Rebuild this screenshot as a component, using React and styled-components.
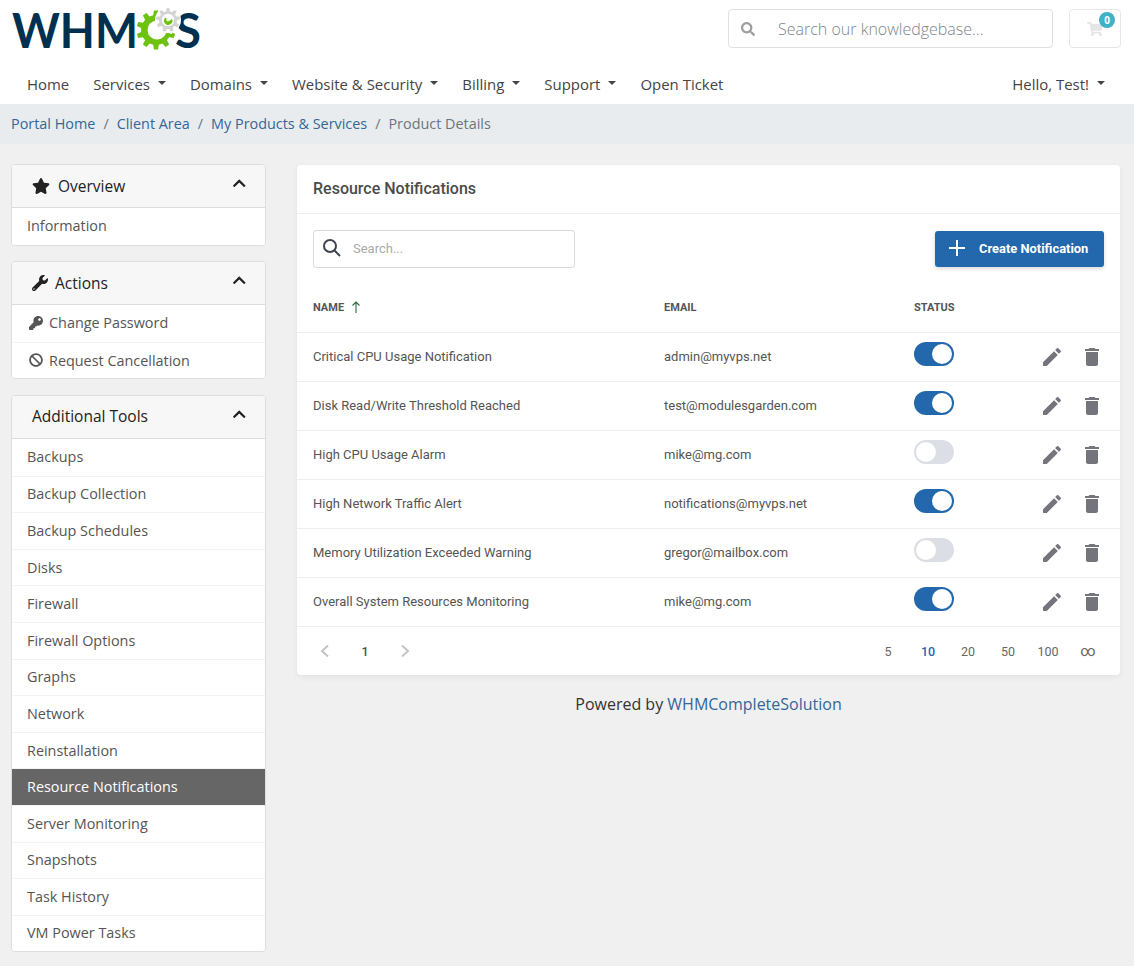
import React from "react";
import styled, { createGlobalStyle } from "styled-components";
import {
  FaSearch,
  FaShoppingCart,
  FaStar,
  FaWrench,
  FaKey,
  FaBan,
  FaChevronUp,
} from "react-icons/fa";
import { MdEdit, MdDelete } from "react-icons/md";

const GlobalStyle = createGlobalStyle`
  html, body {
    margin: 0;
    padding: 0;
    background: #f0f0f0;
  }
  body {
    font-family: "Open Sans", "Liberation Sans", sans-serif;
    color: #333;
  }
  * { box-sizing: border-box; }
`;

const navItems = [
  { label: "Home" },
  { label: "Services", caret: true },
  { label: "Domains", caret: true },
  { label: "Website & Security", caret: true },
  { label: "Billing", caret: true },
  { label: "Support", caret: true },
  { label: "Open Ticket" },
];

const crumbs = ["Portal Home", "Client Area", "My Products & Services"];

const toolLinks = [
  "Backups",
  "Backup Collection",
  "Backup Schedules",
  "Disks",
  "Firewall",
  "Firewall Options",
  "Graphs",
  "Network",
  "Reinstallation",
  "Resource Notifications",
  "Server Monitoring",
  "Snapshots",
  "Task History",
  "VM Power Tasks",
];

const rows = [
  { name: "Critical CPU Usage Notification", email: "admin@myvps.net", on: true },
  { name: "Disk Read/Write Threshold Reached", email: "test@modulesgarden.com", on: true },
  { name: "High CPU Usage Alarm", email: "mike@mg.com", on: false },
  { name: "High Network Traffic Alert", email: "notifications@myvps.net", on: true },
  { name: "Memory Utilization Exceeded Warning", email: "gregor@mailbox.com", on: false },
  { name: "Overall System Resources Monitoring", email: "mike@mg.com", on: true },
];

const pageSizes = ["5", "10", "20", "50", "100", "∞"];

const gearPath = (cx, cy, outer, inner, teeth) => {
  let d = "";
  const step = (Math.PI * 2) / teeth;
  for (let i = 0; i < teeth; i++) {
    const a = i * step - Math.PI / 2;
    const pts = [
      [a - step * 0.3, inner],
      [a - step * 0.17, outer],
      [a + step * 0.17, outer],
      [a + step * 0.3, inner],
    ];
    pts.forEach(([ang, r], j) => {
      const x = (cx + Math.cos(ang) * r).toFixed(1);
      const y = (cy + Math.sin(ang) * r).toFixed(1);
      d += `${i === 0 && j === 0 ? "M" : "L"}${x} ${y} `;
    });
  }
  return d + "Z";
};

const Logo = () => (
  <LogoSvg width="190" height="44" viewBox="0 0 190 44">
    <text x="0" y="41" fontFamily="Lato, sans-serif" fontWeight="700" fontSize="48" fill="#003050" textLength="126" lengthAdjust="spacingAndGlyphs">WHM</text>
    <text x="163" y="41" fontFamily="Lato, sans-serif" fontWeight="700" fontSize="48" fill="#003050" textLength="26" lengthAdjust="spacingAndGlyphs">S</text>
    {/* green gear, open towards the grey one */}
    <path d={gearPath(144, 23, 19.5, 15, 10)} fill="#6cc20e" />
    <circle cx="145" cy="23" r="9.5" fill="#fff" />
    <path d="M145 23 L160 16 L160 27 Z" fill="#fff" />
    {/* grey gear */}
    <circle cx="156" cy="13" r="13" fill="#fff" />
    <path d={gearPath(156, 13, 12, 9, 9)} fill="#d4d4d4" />
    <circle cx="156" cy="13" r="6.2" fill="#fff" />
    <path d="M153 11 A4.2 4.2 0 1 0 160 12 L157 14 A1.4 1.4 0 0 1 155 11 Z" fill="#6cc20e" />
  </LogoSvg>
);

const LogoSvg = styled.svg`
  display: block;
  overflow: visible;
`;

const Header = styled.header`
  background: #fff;
  height: 66px;
  padding: 9px 13px 0 12px;
  display: flex;
  align-items: flex-start;
`;

const LogoWrap = styled.a`
  display: block;
  margin-top: -2px;
  height: 44px;
  margin-right: auto;
`;

const KbSearch = styled.div`
  width: 325px;
  height: 39px;
  border: 1px solid #e0e0e0;
  border-radius: 4px;
  display: flex;
  align-items: center;
  padding-left: 12px;
  background: #fff;

  svg {
    font-size: 14px;
    color: #a09d9d;
    margin-right: 23px;
  }
`;

const KbPlaceholder = styled.span`
  color: #7c858d;
  font-size: 16px;
  font-weight: 300;
`;

const CartButton = styled.div`
  position: relative;
  width: 52px;
  height: 39px;
  margin-left: 16px;
  border: 1px solid #e6e6e6;
  border-radius: 4px;
  display: flex;
  align-items: center;
  justify-content: center;
  color: #e5e5e5;
  font-size: 16px;
`;

const CartBadge = styled.span`
  position: absolute;
  top: 2px;
  right: 5px;
  width: 16px;
  height: 16px;
  border-radius: 50%;
  background: #3fb2c6;
  color: #fff;
  font-size: 10px;
  font-weight: 700;
  display: flex;
  align-items: center;
  justify-content: center;
`;

const Nav = styled.nav`
  background: #fff;
  height: 38px;
  padding: 0 29px 2px 27px;
  display: flex;
  align-items: center;
  gap: 24px;
`;

const NavLink = styled.a`
  font-size: 14.96px;
  color: #444;
  display: flex;
  align-items: center;
  margin-left: ${(props) => (props.$right ? "auto" : "0")};
  line-height: 36px;
`;

const Caret = styled.span`
  display: inline-block;
  margin-left: 8px;
  width: 0;
  height: 0;
  border-left: 4.5px solid transparent;
  border-right: 4.5px solid transparent;
  border-top: 4.5px solid #444;
  position: relative;
  top: -1px;
`;

const Breadcrumb = styled.div`
  background: #e9ecef;
  height: 40px;
  padding: 0 11px 2px;
  display: flex;
  align-items: center;
  font-size: 14.4px;
  color: #6c757d;
`;

const CrumbLink = styled.a`
  color: #336699;
`;

const CrumbSep = styled.span`
  color: #6c757d;
  padding: 0 8px;
`;

const Main = styled.main`
  display: flex;
  align-items: flex-start;
  padding: 20px 14px 14px 11px;
  gap: 31px;
`;

const Sidebar = styled.aside`
  width: 255px;
  flex-shrink: 0;
  display: flex;
  flex-direction: column;
  gap: 15.6px;
`;

const SideCard = styled.section`
  background: #fff;
  border: 1px solid #ddd;
  border-radius: 4px;
  overflow: hidden;
`;

const SideHeader = styled.div`
  height: 43px;
  background: #f7f7f7;
  border-bottom: 1px solid #dcdcdc;
  display: flex;
  align-items: center;
  padding: 0 19px 1px 20px;
  font-size: 15.5px;
  color: #222;
`;

const SideTitle = styled.span`
  flex: 1;
  display: flex;
  align-items: center;
  gap: ${(props) => (props.$wide ? "8px" : "7px")};

  svg {
    color: #222;
    width: ${(props) => (props.$wide ? "18px" : "16px")};
    height: ${(props) => (props.$wide ? "18px" : "16px")};
  }
`;

const HeaderChevron = styled(FaChevronUp)`
  font-size: 14.5px;
  color: #222;
  position: relative;
  top: -2px;
`;

const SideLink = styled.a`
  display: flex;
  align-items: center;
  height: 36.6px;
  padding: 0 15px 1px;
  font-size: 14.4px;
  color: ${(props) => (props.$active ? "#fff" : "#555")};
  background: ${(props) => (props.$active ? "#666" : "#fff")};
  border-top: ${(props) => (props.$first ? "none" : "1px solid #f3f3f3")};

  svg {
    font-size: 14px;
    color: #555;
    margin: 0 6px 0 2px;
  }
`;

const Content = styled.div`
  flex: 1;
  min-width: 0;
  font-family: Roboto, "Liberation Sans", sans-serif;
`;

const Panel = styled.section`
  background: #fff;
  border-radius: 4px;
  margin-top: 1px;
  box-shadow: 0 2px 6px rgba(0, 0, 0, 0.06);
`;

const PanelTitle = styled.h2`
  margin: 0;
  height: 49px;
  padding: 0 16px 2px;
  display: flex;
  align-items: center;
  font-size: 16px;
  font-weight: 500;
  color: #4b4b4b;
  border-bottom: 1px solid #eeeef2;
`;

const Toolbar = styled.div`
  display: flex;
  justify-content: space-between;
  align-items: center;
  padding: 16px 16px 0;
`;

const SearchBox = styled.div`
  width: 262px;
  height: 38px;
  border: 1px solid #d9dae2;
  border-radius: 3px;
  display: flex;
  align-items: center;
  padding: 0 0 2px 8px;
  gap: 11px;
  font-size: 13px;
  color: #aaa;
`;

const CreateButton = styled.button`
  width: 169px;
  height: 36px;
  background: #2368ac;
  border: none;
  border-radius: 3px;
  color: #fff;
  font-family: Roboto, "Liberation Sans", sans-serif;
  font-size: 12.9px;
  font-weight: 700;
  display: flex;
  align-items: center;
  padding: 0 0 2px 14px;
  gap: 14px;
  box-shadow: 0 2px 4px rgba(0, 0, 0, 0.15);
`;

const Table = styled.table`
  width: 100%;
  border-collapse: collapse;
  table-layout: fixed;
  font-size: 13px;
  color: #555;
`;

const HeadCell = styled.th`
  height: 64px;
  padding: 15px 0 0 ${(props) => props.$pl || "0"};
  text-align: left;
  font-size: 11px;
  font-weight: 700;
  color: #555;
  width: ${(props) => props.$w || "auto"};
`;

const SortArrow = styled.svg`
  margin-left: 7px;
  vertical-align: -2px;
`;

const Row = styled.tr`
  height: 49px;
  border-top: 1px solid #eeeef2;
`;

const Cell = styled.td`
  padding-left: ${(props) => props.$pl || "0"};
  white-space: nowrap;
`;

const Toggle = styled.span`
  display: block;
  position: relative;
  top: -3px;
  width: 40px;
  height: 24px;
  border-radius: 12px;
  background: ${(props) => (props.$on ? "#2368ac" : "#dcdee6")};

  &::after {
    content: "";
    position: absolute;
    top: 2px;
    left: ${(props) => (props.$on ? "18px" : "2px")};
    width: 20px;
    height: 20px;
    border-radius: 50%;
    background: #fff;
  }
`;

const Actions = styled.div`
  display: flex;
  justify-content: flex-end;
  align-items: center;
  gap: 16px;
  padding-right: 15px;
  color: #74747c;
  font-size: 24px;
`;

const PanelFooter = styled.div`
  height: 49px;
  border-top: 1px solid #eeeef2;
  display: flex;
  align-items: center;
  justify-content: space-between;
  padding: 0 12px 0 23px;
  font-size: 12.5px;
  color: #666;
`;

const Pager = styled.div`
  display: flex;
  align-items: center;
`;

const PagerCell = styled.span`
  width: ${(props) => props.$w || "40px"};
  display: flex;
  justify-content: center;
  font-weight: ${(props) => (props.$bold ? 500 : 400)};
  color: ${(props) => props.$color || "#666"};
  font-size: ${(props) => props.$size || "12.5px"};
`;

const Powered = styled.p`
  margin: 19px 0 0;
  text-align: center;
  font-family: "Open Sans", "Liberation Sans", sans-serif;
  font-size: 16px;
  line-height: 20px;
  color: #333;
`;

const PoweredLink = styled.a`
  color: #336699;
`;

const SideItems = ({ items, active }) =>
  items.map((item, i) => (
    <SideLink key={item} $first={i === 0} $active={item === active}>
      {item}
    </SideLink>
  ));

const Chevron = ({ dir }) => (
  <svg width="10" height="14" viewBox="0 0 10 14" fill="none" stroke="#c4c4c4" strokeWidth="2">
    <path d={dir === "left" ? "M8 1.5 2 7l6 5.5" : "M2 1.5 8 7l-6 5.5"} />
  </svg>
);

export default function App() {
  return (
    <>
      <GlobalStyle />
      <Header>
        <LogoWrap>
          <Logo />
        </LogoWrap>
        <KbSearch>
          <FaSearch />
          <KbPlaceholder>Search our knowledgebase...</KbPlaceholder>
        </KbSearch>
        <CartButton>
          <FaShoppingCart />
          <CartBadge>0</CartBadge>
        </CartButton>
      </Header>
      <Nav>
        {navItems.map((item) => (
          <NavLink key={item.label}>
            {item.label}
            {item.caret && <Caret />}
          </NavLink>
        ))}
        <NavLink $right>
          Hello, Test!
          <Caret />
        </NavLink>
      </Nav>
      <Breadcrumb>
        {crumbs.map((c) => (
          <React.Fragment key={c}>
            <CrumbLink>{c}</CrumbLink>
            <CrumbSep>/</CrumbSep>
          </React.Fragment>
        ))}
        Product Details
      </Breadcrumb>
      <Main>
        <Sidebar>
          <SideCard>
            <SideHeader>
              <SideTitle $wide>
                <FaStar />
                Overview
              </SideTitle>
              <HeaderChevron />
            </SideHeader>
            <SideItems items={["Information"]} />
          </SideCard>
          <SideCard>
            <SideHeader>
              <SideTitle>
                <FaWrench />
                Actions
              </SideTitle>
              <HeaderChevron />
            </SideHeader>
            <SideLink $first>
              <FaKey />
              Change Password
            </SideLink>
            <SideLink>
              <FaBan />
              Request Cancellation
            </SideLink>
          </SideCard>
          <SideCard>
            <SideHeader>
              <SideTitle>Additional Tools</SideTitle>
              <HeaderChevron />
            </SideHeader>
            <SideItems items={toolLinks} active="Resource Notifications" />
          </SideCard>
        </Sidebar>
        <Content>
          <Panel>
            <PanelTitle>Resource Notifications</PanelTitle>
            <Toolbar>
              <SearchBox>
                <svg width="20" height="20" viewBox="0 0 20 20" fill="none" stroke="#3d4450" strokeWidth="2">
                  <circle cx="8" cy="8" r="6" />
                  <path d="m12.5 12.5 5.5 5.5" />
                </svg>
                Search...
              </SearchBox>
              <CreateButton>
                <svg width="16" height="16" viewBox="0 0 16 16" stroke="#fff" strokeWidth="2">
                  <path d="M8 0v16M0 8h16" />
                </svg>
                Create Notification
              </CreateButton>
            </Toolbar>
            <Table>
              <thead>
                <tr>
                  <HeadCell $w="367px" $pl="16px">
                    NAME
                    <SortArrow width="10" height="12" viewBox="0 0 10 12" fill="none" stroke="#2a6a3a" strokeWidth="1.1">
                      <path d="M5 12V1M1.5 4.5 5 1l3.5 3.5" />
                    </SortArrow>
                  </HeadCell>
                  <HeadCell $w="250px">EMAIL</HeadCell>
                  <HeadCell $w="100px">STATUS</HeadCell>
                  <HeadCell />
                </tr>
              </thead>
              <tbody>
                {rows.map((row) => (
                  <Row key={row.name}>
                    <Cell $pl="16px">{row.name}</Cell>
                    <Cell>{row.email}</Cell>
                    <Cell>
                      <Toggle $on={row.on} />
                    </Cell>
                    <Cell>
                      <Actions>
                        <MdEdit />
                        <MdDelete />
                      </Actions>
                    </Cell>
                  </Row>
                ))}
              </tbody>
            </Table>
            <PanelFooter>
              <Pager>
                <Chevron dir="left" />
                <PagerCell $bold $w="70px" $color="#44505c">1</PagerCell>
                <Chevron dir="right" />
              </Pager>
              <Pager>
                {pageSizes.map((size) => (
                  <PagerCell
                    key={size}
                    $bold={size === "10"}
                    $color={size === "10" ? "#2368ac" : "#666"}
                    $size={size === "∞" ? "15px" : "12.5px"}
                  >
                    {size}
                  </PagerCell>
                ))}
              </Pager>
            </PanelFooter>
          </Panel>
          <Powered>
            Powered by <PoweredLink>WHMCompleteSolution</PoweredLink>
          </Powered>
        </Content>
      </Main>
    </>
  );
}
